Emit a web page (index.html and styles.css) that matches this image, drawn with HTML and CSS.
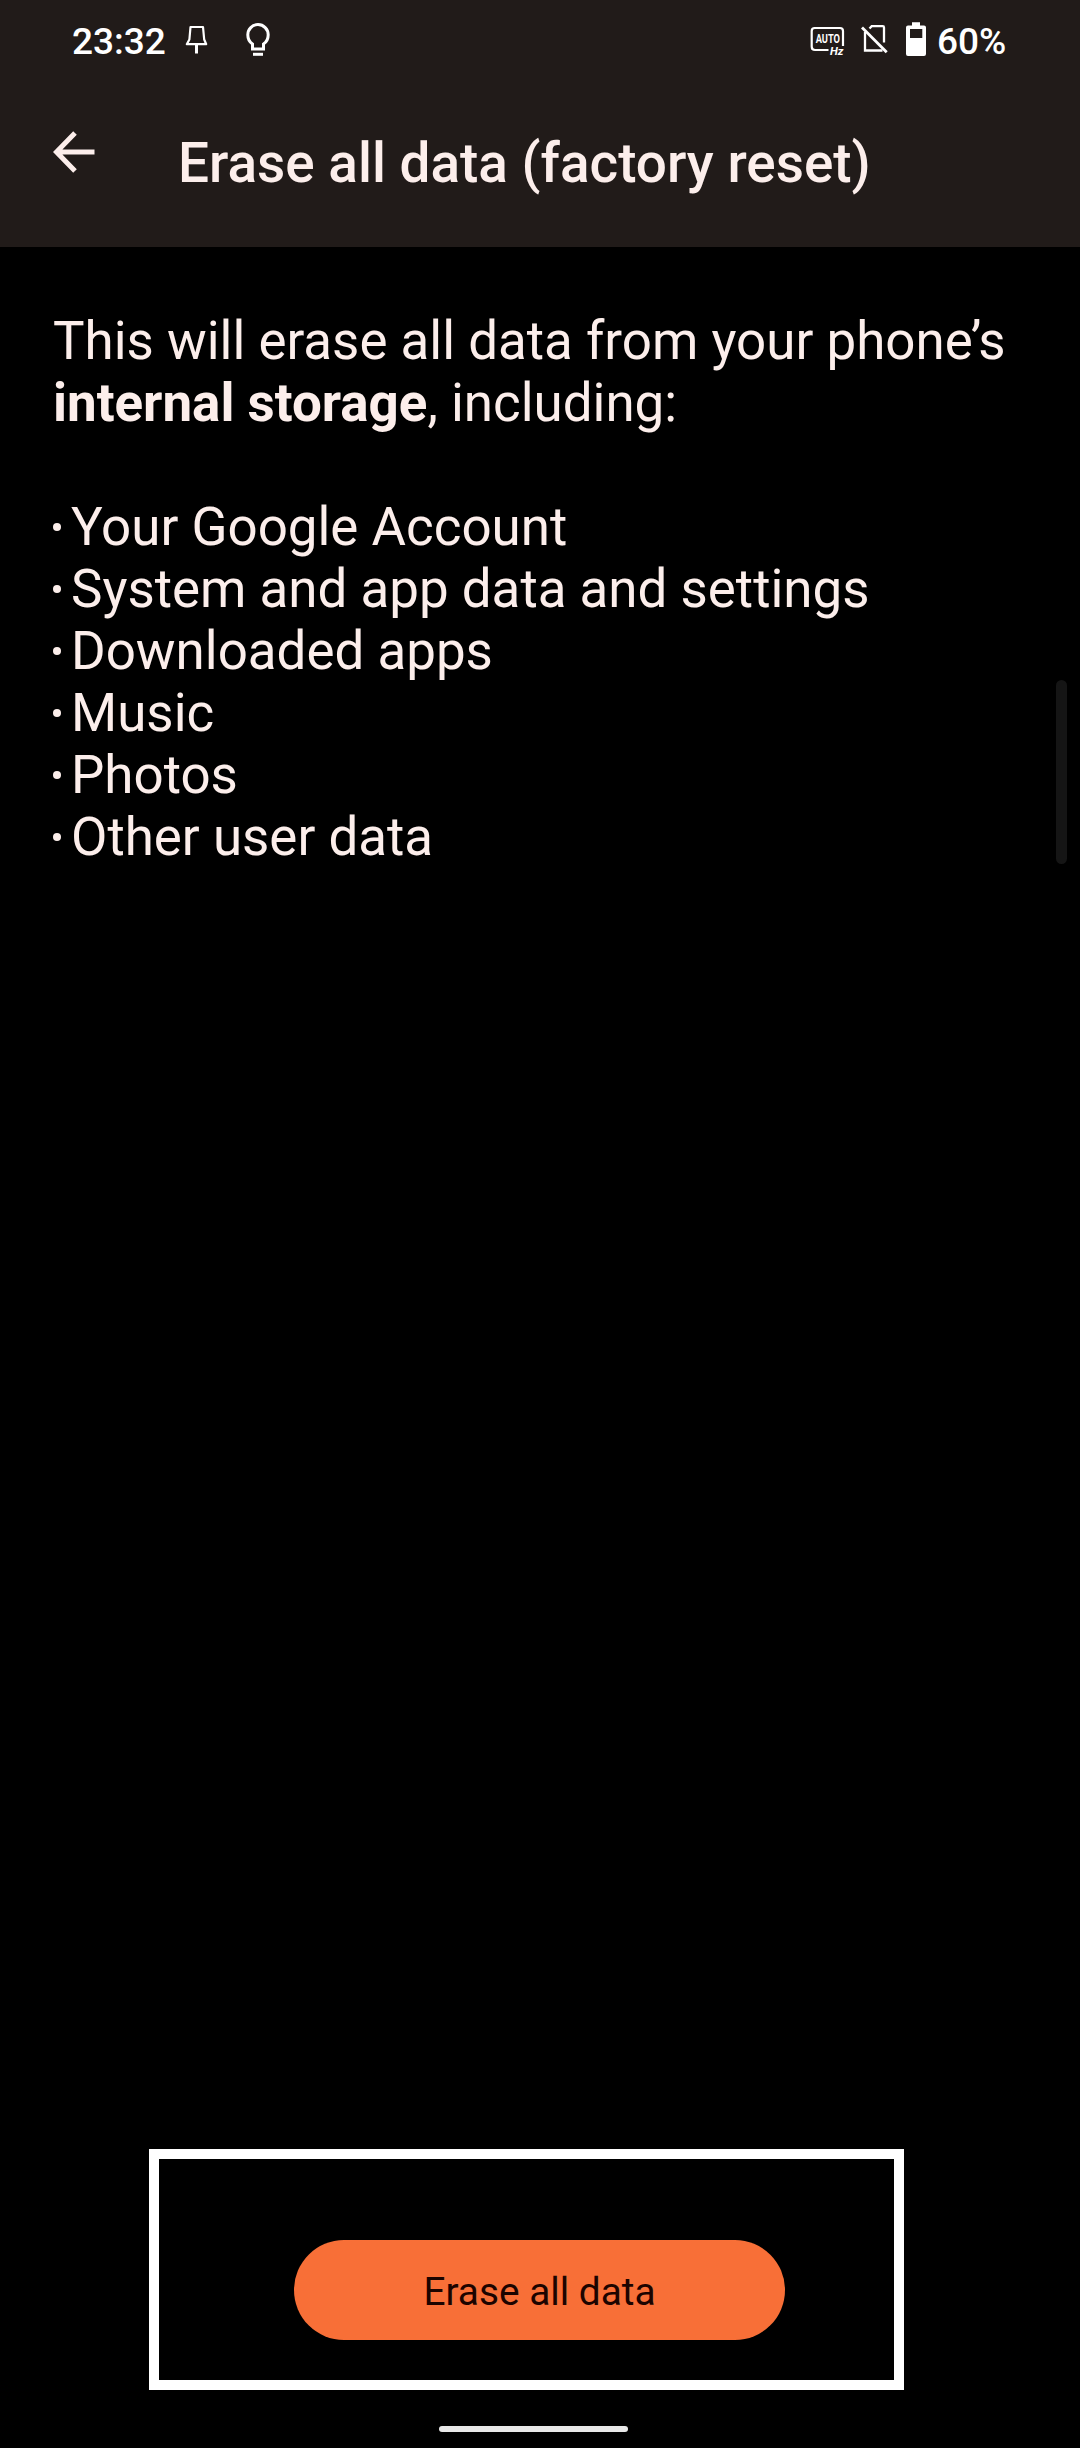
FILE: index.html
```html
<!DOCTYPE html>
<html lang="en">

<head>
  <meta charset="utf-8">
  <title>Erase all data (factory reset)</title>
  <link rel="stylesheet" href="styles.css">
</head>

<body>
  <div class="screen">
    <header class="top">
      <div class="status-bar">
        <span class="clock">23:32</span>
        <svg class="icon-pin" width="24" height="32" viewBox="185 24 24 32" fill="none" stroke="#fff" stroke-width="2.2">
          <path d="M190.5 27h12.5l1.2 12.5 2 4.7h-19.4l2.6-4.7z" stroke-linejoin="round" />
          <path d="M196.5 45v8.5" stroke-width="3" />
        </svg>
        <svg class="icon-bulb" width="28" height="36" viewBox="244 22 28 36" fill="none" stroke="#fff" stroke-width="3">
          <path d="M252.5 49v-5c-3-1.9-4.7-5.3-4.7-9.2a10.2 10.2 0 0 1 20.4 0c0 3.9-1.7 7.3-4.7 9.2v5z" />
          <path d="M253 54.3h10" />
        </svg>
        <div class="status-right">
          <svg class="icon-hz" width="36" height="34" viewBox="810 24 36 34" fill="none" stroke="#fff" stroke-width="2.2">
            <path d="M828.5 50h-13.5q-3.3 0-3.3-3.5v-15.5q0-3 3-3h25.3q3 0 3 3v15" />
            <text class="hz-auto" x="815.7" y="43" textLength="24.3" lengthAdjust="spacingAndGlyphs">AUTO</text>
            <text class="hz-unit" x="830" y="55" textLength="13.5" lengthAdjust="spacingAndGlyphs">Hz</text>
          </svg>
          <svg class="icon-sim" width="28" height="30" viewBox="860 24 28 30" fill="none" stroke="#fff" stroke-width="2.3">
            <path d="M865 32v18.5h17.5M869.5 28.5l2.2-2.3h11q1.3 0 1.3 1.3v15" />
            <path d="M862 27.5l24.7 24.7" stroke-width="2.8" />
          </svg>
          <svg class="icon-battery" width="20" height="34" viewBox="906 22 20 34" fill="#fff">
            <path fill-rule="evenodd" d="M912 22.3h8v3.2h4q2 0 2 2v26.5q0 2-2 2h-16q-2 0-2-2v-26.5q0-2 2-2h4zM910 29v9h12.3v-9z" />
          </svg>
          <span class="percent">60%</span>
        </div>
      </div>
      <div class="app-bar">
        <svg class="back" width="44" height="44" viewBox="0 0 44 44" fill="none" stroke="#fceeeb" stroke-width="5">
          <path d="M23 3L4.5 22 23 41M4.5 22h38" />
        </svg>
        <h1 class="title">Erase all data (factory reset)</h1>
      </div>
    </header>

    <main class="content">
      <p>This will erase all data from your phone’s <b>internal storage</b>, including:</p>
      <ul class="erase-list">
        <li>Your Google Account</li>
        <li>System and app data and settings</li>
        <li>Downloaded apps</li>
        <li>Music</li>
        <li>Photos</li>
        <li>Other user data</li>
      </ul>
    </main>

    <div class="highlight">
      <button class="btn" type="button">Erase all data</button>
    </div>
    <div class="home-bar"></div>
    <div class="scrollbar"></div>
  </div>
</body>

</html>
```
FILE: styles.css
```css
* {
    box-sizing: border-box;
}
body {
    margin: 0;
    background: #000;
    font-family: Roboto, sans-serif;
    color: #fceeeb;
}
.screen {
    position: relative;
    display: flex;
    flex-direction: column;
    width: 1080px;
    height: 2448px;
    overflow: hidden;
    background: #000;
}

/* status bar + title */
.top {
    height: 247px;
    background: #211b19;
}
.status-bar {
    display: flex;
    align-items: flex-start;
    height: 80px;
    padding: 0 74px 0 72px;
    color: #fff;
    font-size: 37px;
    font-weight: 500;
    line-height: 44px;
}
.clock {
    width: 113px;
    padding-top: 20px;
}
.icon-pin {
    margin-top: 24px;
}
.icon-bulb {
    margin: 22px 0 0 35px;
}
.status-right {
    display: flex;
    align-items: flex-start;
    margin-left: auto;
}
.icon-hz {
    margin: 24px 14px 0 0;
}
.hz-auto,
.hz-unit {
    fill: #fff;
    stroke: none;
    font-size: 12px;
    font-weight: 700;
}
.hz-unit {
    font-size: 11.5px;
    font-style: italic;
}
.icon-sim {
    margin: 24px 18px 0 0;
}
.icon-battery {
    margin: 22px 11px 0 0;
}
.percent {
    width: 69px;
    padding-top: 20px;
    white-space: nowrap;
}
.app-bar {
    display: flex;
    align-items: flex-start;
    padding: 50px 0 0 52px;
}
.title {
    margin: 0 0 0 82px;
    padding-top: 1px;
    font-size: 54.9px;
    font-weight: 500;
    line-height: 64px;
    white-space: nowrap;
}

.content {
    flex: 1;
    padding: 63px 60px 0 53px;
    font-size: 52.9px;
    line-height: 62px;
}
.content p {
    margin: 0 0 62px;
}
.erase-list {
    margin: 0;
    padding: 0;
    list-style: none;
}
.erase-list li {
    display: flex;
    align-items: center;
    gap: 10px;
}
.erase-list li::before {
    content: "";
    width: 8px;
    height: 8px;
    border-radius: 50%;
    background: #fceeeb;
}

.highlight {
    display: flex;
    justify-content: flex-start;
    width: 755px;
    height: 241px;
    margin-left: 149px;
    padding: 81px 0 0 135px;
    border: 10px solid #fff;
}
.btn {
    width: 491px;
    height: 100px;
    padding: 2px 0 0;
    border: none;
    border-radius: 50px;
    background: #f86f37;
    color: #1c0400;
    font-family: inherit;
    font-size: 38.8px;
}
.home-bar {
    width: 189px;
    height: 6px;
    margin: 36px 0 16px 439px;
    border-radius: 3px;
    background: #e8e8e8;
}
.scrollbar {
    position: absolute;
    top: 680px;
    right: 13px;
    width: 11px;
    height: 184px;
    border-radius: 6px;
    background: #151515;
}
```
